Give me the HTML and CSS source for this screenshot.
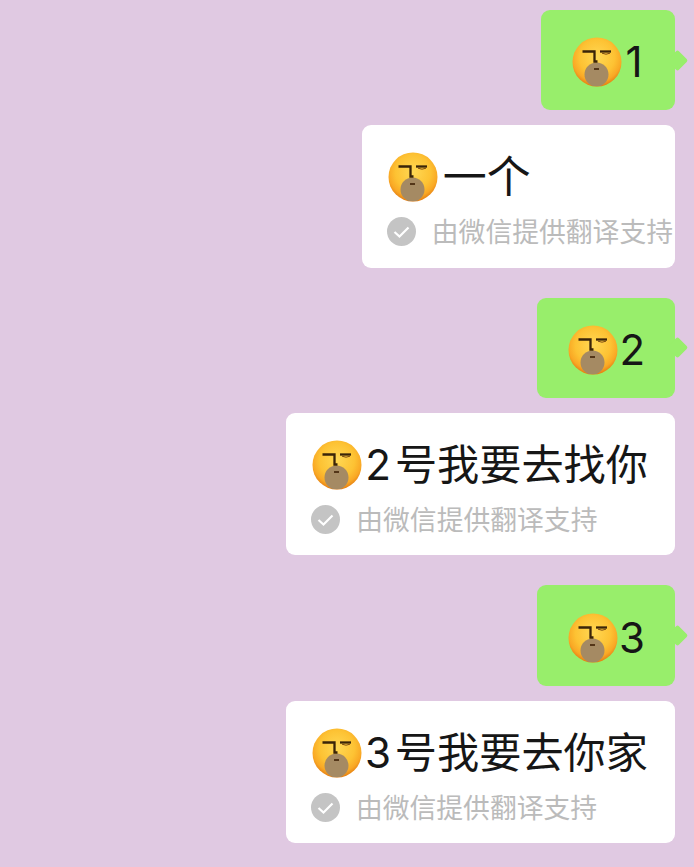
FILE: index.html
```html
<!DOCTYPE html>
<html lang="zh">
  <head>
    <meta charset="UTF-8" />
    <title>翻译</title>
    <link rel="stylesheet" href="styles.css">
  </head>
  <body>
    <svg class="sprite" aria-hidden="true">
      <defs>
        <radialGradient id="faceFill" cx="50%" cy="40%" r="60%">
          <stop offset="0" stop-color="#ffd854" />
          <stop offset="0.6" stop-color="#fdc233" />
          <stop offset="0.84" stop-color="#f9a825" />
          <stop offset="1" stop-color="#e57f12" />
        </radialGradient>
        <clipPath id="faceClip"><circle cx="25" cy="25" r="24.5" /></clipPath>
        <symbol id="face" viewBox="0 0 50 50">
          <circle cx="25" cy="25" r="24.5" fill="url(#faceFill)" />
          <circle cx="24.5" cy="37.5" r="12" fill="#a58a63" clip-path="url(#faceClip)" />
          <path d="M10.5 14.5h12v10h3" fill="none" stroke="#3a2409" stroke-width="2.3" />
          <path d="M28 14.5h11" fill="none" stroke="#3a2409" stroke-width="2.3" />
          <path d="M30 16.2q4 2 8 0" fill="none" stroke="#7a4a12" stroke-width="1" />
          <path d="M22 32h5" stroke="#4a2c10" stroke-width="1.8" />
        </symbol>
        <symbol id="tick" viewBox="0 0 29 29">
          <circle cx="14.5" cy="14.5" r="14.5" fill="#c4c4c4" />
          <path d="M7.5 15l5 4.5 9-9" fill="none" stroke="#fff" stroke-width="2.2" />
        </symbol>
      </defs>
    </svg>

    <div class="group">
      <div class="bubble green">
        <svg class="emoji"><use href="#face" /></svg><span class="digit">1</span>
      </div>
      <div class="bubble white">
        <div class="line">
          <svg class="emoji"><use href="#face" /></svg><span class="lead">一个</span>
        </div>
        <div class="credit">
          <svg class="tick"><use href="#tick" /></svg><span>由微信提供翻译支持</span>
        </div>
      </div>
    </div>

    <div class="group">
      <div class="bubble green">
        <svg class="emoji"><use href="#face" /></svg><span class="digit">2</span>
      </div>
      <div class="bubble white">
        <div class="line">
          <svg class="emoji"><use href="#face" /></svg><span>2 号我要去找你</span>
        </div>
        <div class="credit">
          <svg class="tick"><use href="#tick" /></svg><span>由微信提供翻译支持</span>
        </div>
      </div>
    </div>

    <div class="group">
      <div class="bubble green">
        <svg class="emoji"><use href="#face" /></svg><span class="digit">3</span>
      </div>
      <div class="bubble white">
        <div class="line">
          <svg class="emoji"><use href="#face" /></svg><span>3 号我要去你家</span>
        </div>
        <div class="credit">
          <svg class="tick"><use href="#tick" /></svg><span>由微信提供翻译支持</span>
        </div>
      </div>
    </div>
  </body>
</html>
```

FILE: styles.css
```css
html,
body {
  height: 100%;
}
body {
  background-color: #e0c9e2;
  color: #161616;
  margin: 0;
  padding: 10px 19px 0 0;
  box-sizing: border-box;
  overflow: hidden;
  font-family: Inter, "Noto Sans CJK SC", sans-serif;
}
.sprite {
  display: block;
  width: 0;
  height: 0;
}
.group {
  display: flex;
  flex-direction: column;
  align-items: flex-end;
  gap: 15px;
  margin-bottom: 30px;
}
.bubble {
  border-radius: 9px;
  position: relative;
}
.green {
  background-color: #98ee6b;
  display: flex;
  align-items: center;
  height: 100.3px;
  box-sizing: border-box;
  padding: 4px 30px 0 31px;
  font-size: 42px;
  line-height: 50px;
}
.green .emoji {
  margin-right: 1px;
}
.green::after {
  content: "";
  position: absolute;
  top: 42.5px;
  right: -10px;
  width: 15px;
  height: 15px;
  border-radius: 2px;
  background-color: #98ee6b;
  transform: rotate(45deg);
}
.digit {
  min-width: 22px;
  text-align: center;
}
.white {
  background-color: #fff;
  padding: 27px 2px 21.4px 25px;
}
.line {
  display: flex;
  align-items: center;
  padding: 0 25px 0 1px;
  font-size: 42.2px;
  line-height: 50px;
  word-spacing: -8px;
  white-space: nowrap;
}
.line .emoji {
  margin-right: 3px;
}
.lead {
  margin-left: 2px;
  font-size: 44px;
}
.emoji {
  width: 50px;
  height: 50px;
  flex: none;
}
.credit {
  display: flex;
  align-items: center;
  height: 29px;
  margin-top: 15px;
  color: #bbb;
  font-size: 26.8px;
  line-height: 29px;
  white-space: nowrap;
}
.credit span {
  padding-top: 2px;
}
.tick {
  width: 29px;
  height: 29px;
  margin-right: 16px;
  flex: none;
}
```
